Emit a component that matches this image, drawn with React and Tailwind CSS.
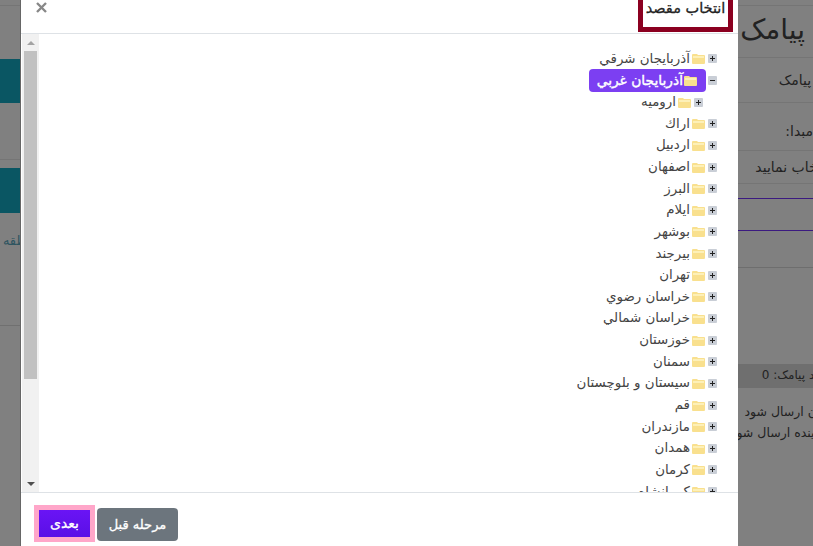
import React from 'react';

const provinces = [
    { name: 'آذربايجان شرقي' },
    { name: 'آذربايجان غربي', active: true },
    { name: 'ارومیه', child: true },
    { name: 'اراك' },
    { name: 'اردبيل' },
    { name: 'اصفهان' },
    { name: 'البرز' },
    { name: 'ايلام' },
    { name: 'بوشهر' },
    { name: 'بيرجند' },
    { name: 'تهران' },
    { name: 'خراسان رضوي' },
    { name: 'خراسان شمالي' },
    { name: 'خوزستان' },
    { name: 'سمنان' },
    { name: 'سيستان و بلوچستان' },
    { name: 'قم' },
    { name: 'مازندران' },
    { name: 'همدان' },
    { name: 'كرمان' },
    { name: 'كرمانشاه' },
];

const Toggle = ({ open }) => (
    <svg width="9" height="9" viewBox="0 0 9 9" className="shrink-0">
        <rect x="0" y="0" width="9" height="9" rx="1" fill="#c9ced6" />
        <rect x="2" y="4" width="5" height="1" fill="#222" />
        {!open && <rect x="4" y="2" width="1" height="5" fill="#222" />}
    </svg>
);

const Folder = () => (
    <svg width="13" height="11" viewBox="0 0 13 11" className="shrink-0">
        <path d="M0 2 Q0 1 1 1 H5 L6 2 H12 Q13 2 13 3 V10 Q13 11 12 11 H1 Q0 11 0 10 Z" fill="#f9e08e" />
        <rect x="1" y="3" width="11" height="2" fill="#fdf0b8" />
    </svg>
);

const TreeRow = ({ item }) => (
    <div className={`h-[21.65px] flex items-center ${item.child ? 'pr-[35px]' : 'pr-[21px]'}`}>
        <Toggle open={item.active} />
        {item.active ? (
            <span className="mr-[2px] h-[23px] flex items-center gap-[1px] bg-[#7c3ff2] rounded-[4px] pl-[8px] pr-[9px] text-white text-[13.8px] [-webkit-text-stroke:0.4px_white] whitespace-nowrap">
                <Folder />
                {item.name}
            </span>
        ) : (
            <span className="mr-[3px] flex items-center gap-[2px] text-[13.4px] text-[#444] whitespace-nowrap">
                <Folder />
                {item.name}
            </span>
        )}
    </div>
);

const App = () => {
    return (
        <div className="w-[813px] h-[546px] overflow-hidden flex bg-[#808080] font-['DejaVu_Sans',sans-serif]" dir="ltr">
            <div className="w-[21px] shrink-0 flex flex-col border-r border-[#666]">
                <div className="h-[6px] border-b border-[#757575]"></div>
                <div className="h-[53px]"></div>
                <div className="h-[44px] bg-[#0a5663]"></div>
                <div className="h-[57px] border-b border-[#757575]"></div>
                <div className="h-[8px]"></div>
                <div className="h-[45px] bg-[#0a5663]"></div>
                <div className="h-[113px] border-b border-[#707070] overflow-hidden" dir="rtl">
                    <div className="pt-[18px] mr-[-18px] text-[13px] text-[#2f5560] whitespace-nowrap">منطقه</div>
                </div>
            </div>

            <div className="w-[717px] shrink-0 h-full bg-white flex flex-col">
                <div className="h-[34px] shrink-0 border-b border-[#dee2e6] flex justify-between pl-[15px] pr-[5px]">
                    <svg width="11" height="11" viewBox="0 0 11 11" className="mt-[2px]">
                        <path d="M1 1 L10 10 M10 1 L1 10" stroke="#888" strokeWidth="2.4" />
                    </svg>
                    <div className="w-[95px] h-[32px] border-[5px] border-t-0 border-[#8b0020] flex justify-center" dir="rtl">
                        <span className="text-[14.5px] leading-[16px] [-webkit-text-stroke:0.3px_#222] text-[#222] whitespace-nowrap">انتخاب مقصد</span>
                    </div>
                </div>
                <div className="flex-1 min-h-0 flex">
                    <div className="w-[17px] ml-[1px] shrink-0 bg-[#f1f1f1] flex flex-col items-center">
                        <div className="h-[17px] flex items-center justify-center">
                            <div className="w-0 h-0 border-x-[4px] border-x-transparent border-b-[4px] border-b-[#a3a3a3]"></div>
                        </div>
                        <div className="w-[13px] h-[328px] bg-[#c1c1c1]"></div>
                        <div className="flex-1"></div>
                        <div className="h-[17px] flex items-center justify-center">
                            <div className="w-0 h-0 border-x-[4px] border-x-transparent border-t-[4px] border-t-[#505050]"></div>
                        </div>
                    </div>
                    <div className="flex-1 overflow-hidden pt-[14px]" dir="rtl">
                        {provinces.map((item) => (
                            <TreeRow key={item.name} item={item} />
                        ))}
                    </div>
                </div>
                <div className="h-[54px] shrink-0 border-t border-[#dee2e6] flex items-start pt-[15px] pl-[13px]">
                    <button className="w-[61px] h-[37px] mt-[-3px] border-[5px] border-[#ffa6c9] bg-gradient-to-b from-[#6a14f5] to-[#5a0fe6] text-white text-[14px] [-webkit-text-stroke:0.3px_white]">بعدی</button>
                    <button className="w-[81px] h-[33px] ml-[2px] rounded-[4px] bg-[#6c757d] text-white text-[13px] [-webkit-text-stroke:0.3px_white]">مرحله قبل</button>
                </div>
            </div>

            <div className="flex-1 min-w-0 overflow-hidden flex flex-col text-[#222]" dir="rtl">
                <div className="h-[6px] shrink-0 border-b border-[#757575]"></div>
                <div className="h-[52px] shrink-0 border-b border-[#757575] pt-[6px] pr-[8px] text-[28px] leading-[36px] whitespace-nowrap">پیامک</div>
                <div className="h-[45px] shrink-0 border-b border-[#757575] pt-[12px] mr-[-22px] text-[14px] whitespace-nowrap">نوع پیامک</div>
                <div className="h-[47px] shrink-0 pt-[18px] text-[14px] whitespace-nowrap">مبدا:</div>
                <div className="h-[34px] shrink-0 border-y border-[#757575] pt-[6px] mr-[-17px] text-[14px] whitespace-nowrap">انتخاب نمایید</div>
                <div className="h-[15px] shrink-0 border-b border-[#3b1a80]"></div>
                <div className="h-[32px] shrink-0 border-b border-[#3b1a80]"></div>
                <div className="h-[37px] shrink-0 border-b border-[#6e6e6e]"></div>
                <div className="h-[96px] shrink-0"></div>
                <div className="h-[24px] shrink-0 bg-[#6f6f6f] pt-[2px] mr-[-20px] text-[12px] whitespace-nowrap">تعداد پیامک: 0</div>
                <div className="pt-[13px] text-[12.5px] leading-[21px] whitespace-nowrap">
                    <div className="mr-[-20px]">بدون ارسال شود</div>
                    <div className="mr-[-5px]">آینده ارسال شود</div>
                </div>
            </div>
        </div>
    );
};

export default App;
